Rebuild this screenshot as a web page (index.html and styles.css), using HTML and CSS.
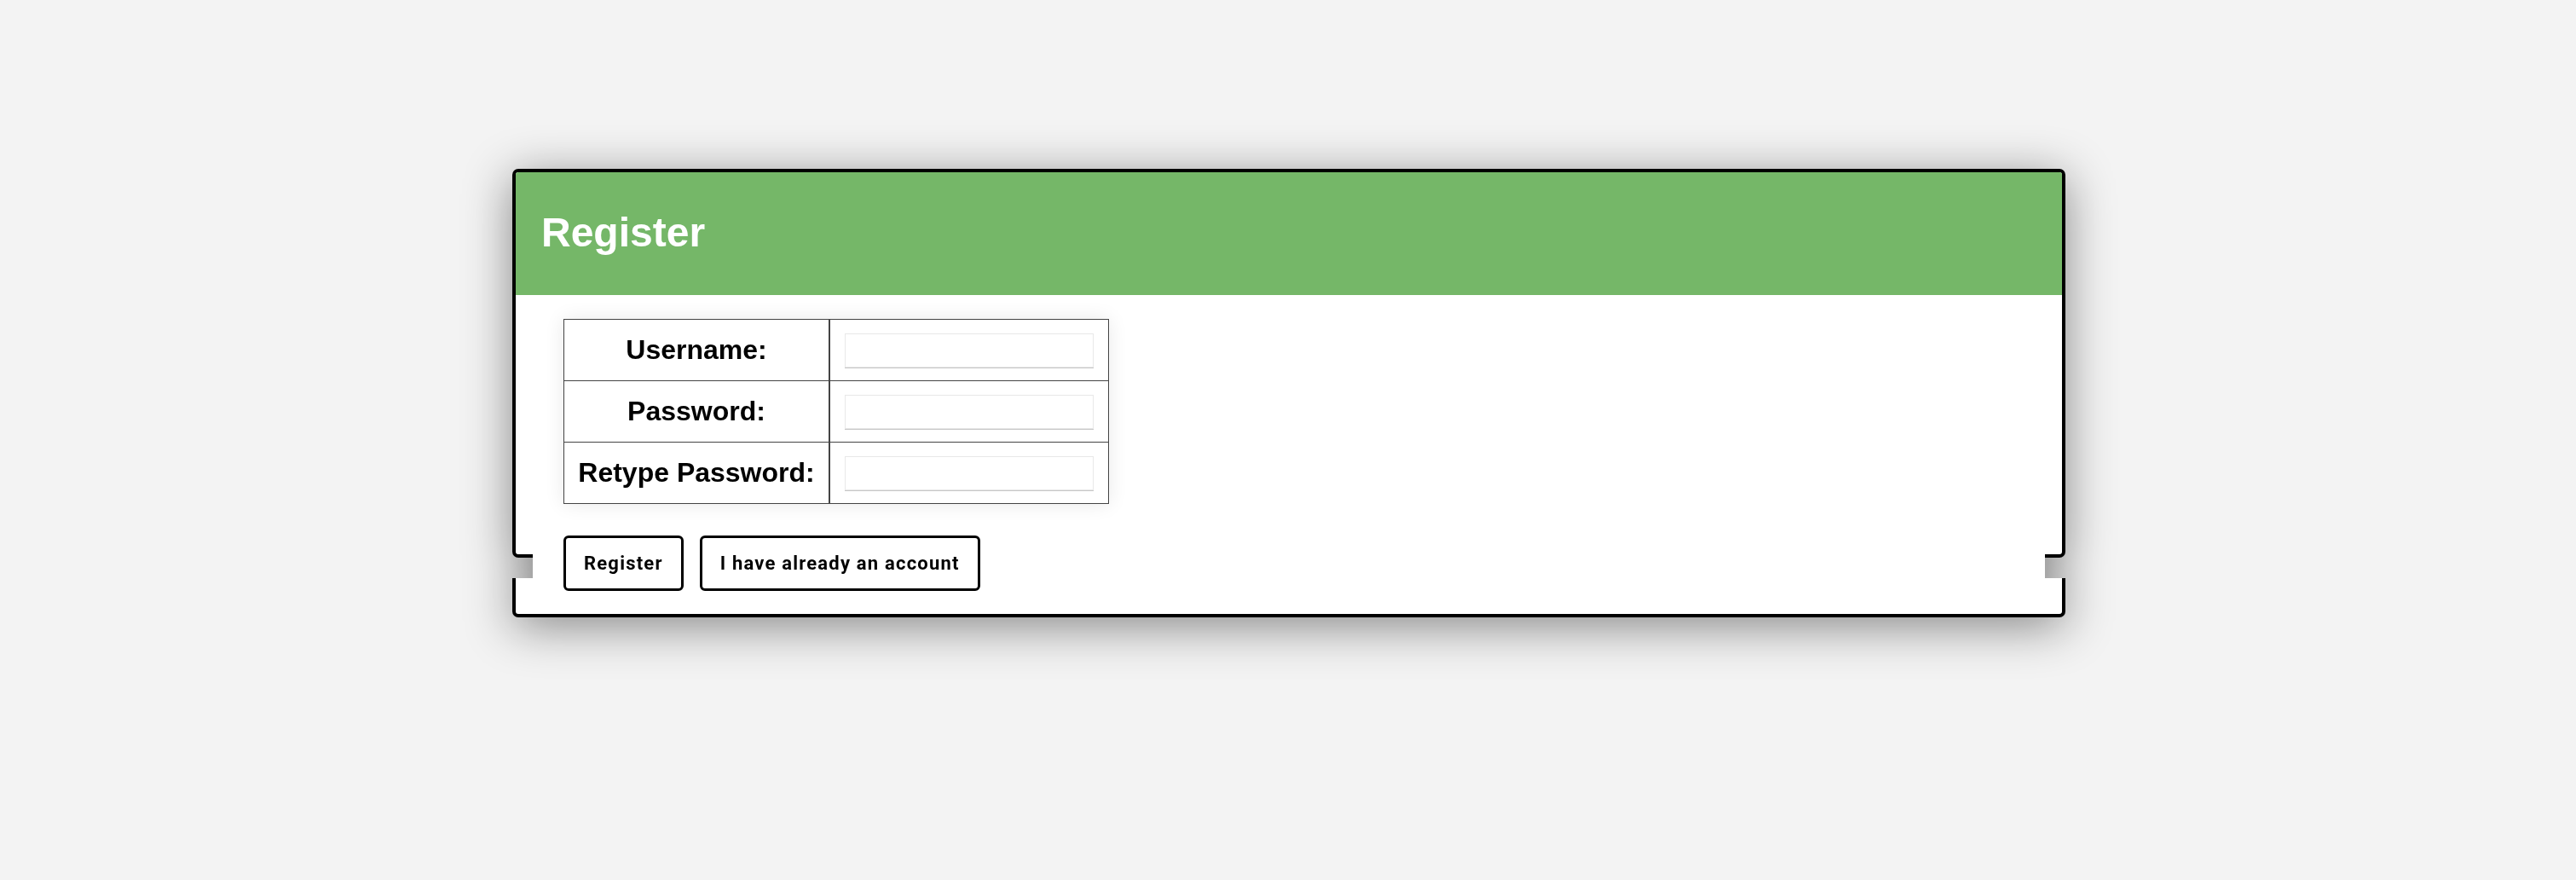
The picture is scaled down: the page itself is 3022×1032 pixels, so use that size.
FILE: index.html
```html
<!DOCTYPE html>
<html lang="en">
<head>
<meta charset="utf-8">
<title>Register</title>
<link rel="stylesheet" href="styles.css">
</head>
<body>
<div class="page">
  <div class="card">
    <div class="card-top">
      <div class="card-header"><h1 class="title">Register</h1></div>
      <div class="card-body">
        <table class="form-table">
          <tr>
            <td class="label">Username:</td>
            <td class="field"><input class="input" type="text"></td>
          </tr>
          <tr>
            <td class="label">Password:</td>
            <td class="field"><input class="input" type="password"></td>
          </tr>
          <tr>
            <td class="label">Retype Password:</td>
            <td class="field"><input class="input" type="password"></td>
          </tr>
        </table>
      </div>
    </div>
    <div class="actions">
      <button class="btn" type="button">Register</button>
      <button class="btn" type="button">I have already an account</button>
    </div>
    <div class="card-bottom"></div>
  </div>
</div>
</body>
</html>
```

FILE: styles.css
```css
html, body {
  margin: 0;
  padding: 0;
  background: #f3f3f3;
}

.page {
  height: 1032px;
  padding: 198px 0 0 601px;
  box-sizing: border-box;
  font-family: "Liberation Sans", Arial, sans-serif;
}

.card {
  width: 1822px;
  display: flex;
  flex-direction: column;
  filter: drop-shadow(0 10px 28px rgba(0, 0, 0, 0.45));
}

.card-top {
  height: 456px;
  box-sizing: border-box;
  border: 4px solid #000;
  border-radius: 7px;
  background: #fff;
}

.card-header {
  background: #75b768;
  border-radius: 3px 3px 0 0;
  padding: 47px 30px 49px;
}

.title {
  margin: 0;
  font-size: 48px;
  line-height: 48px;
  font-weight: bold;
  color: #fff;
}

.card-body {
  padding: 28px 0 0 56px;
}

.form-table {
  border-collapse: separate;
  border-spacing: 0;
  border: 1px solid #444;
  background: #fff;
  box-shadow: 0 0 22px rgba(0, 0, 0, 0.09);
}

.form-table td {
  height: 71px;
  padding: 0;
  vertical-align: middle;
}

.form-table tr + tr td {
  border-top: 1px solid #444;
}

.form-table .label {
  width: 278px;
  padding: 0 16px;
  border-right: 2px solid #444;
  text-align: center;
  white-space: nowrap;
  font-size: 32px;
  font-weight: bold;
  color: #000;
}

.form-table .field {
  padding: 0 17px;
}

.input {
  display: block;
  width: 292px;
  height: 40px;
  box-sizing: border-box;
  margin: 0;
  border: 1px solid #e8e8e8;
  border-radius: 0;
  box-shadow: 0 1px 0 #c6c6c6;
  background: #fff;
  outline: none;
}

.actions {
  position: relative;
  z-index: 1;
  display: flex;
  gap: 19px;
  margin: -30px 24px -20px;
  padding: 4px 0 5px 36px;
  background: #fff;
}

.btn {
  height: 65px;
  padding: 0 21px;
  background: #fff;
  border: 3px solid #000;
  border-radius: 6px;
  font-family: Roboto, "Noto Sans", sans-serif;
  font-weight: 700;
  font-size: 22px;
  letter-spacing: 1.2px;
  color: #000;
  cursor: pointer;
}

.card-bottom {
  height: 46px;
  box-sizing: border-box;
  border: 4px solid #000;
  border-top: 0;
  border-radius: 0 0 7px 7px;
  background: #fff;
}
```
